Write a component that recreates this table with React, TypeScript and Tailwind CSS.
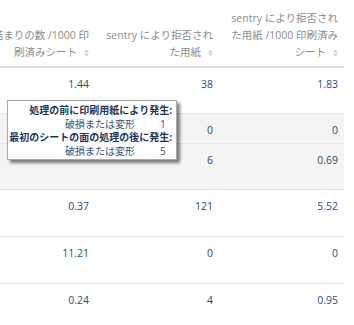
import React from "react";

const SortIcon = () => (
  <svg width="5" height="8" viewBox="0 0 5 8" className="ml-[7px] shrink-0">
    <path d="M0 3.4 L2.5 0.4 L5 3.4 Z" fill="#cfcfcf" />
    <path d="M0 4.6 L5 4.6 L2.5 7.6 Z" fill="#cfcfcf" />
  </svg>
);

const W = ["w-[97px]", "w-[124px]", "w-[123px]"];
const PR = ["pr-[8px]", "pr-[8px]", "pr-[6px]"];

const rows: { h: string; bg: string; v: string[] }[] = [
  { h: "h-[46px]", bg: "bg-white", v: ["1.44", "38", "1.83"] },
  { h: "h-[30px]", bg: "bg-[#f4f4f4]", v: ["", "0", "0"] },
  { h: "h-[46px]", bg: "bg-[#f4f4f4]", v: ["", "6", "0.69"] },
  { h: "h-[47px]", bg: "bg-white", v: ["0.37", "121", "5.52"] },
  { h: "h-[47px]", bg: "bg-white", v: ["11.21", "0", "0"] },
  { h: "h-[47px]", bg: "bg-white", v: ["0.24", "4", "0.95"] },
];

export default function App() {
  const font = { fontFamily: '"Open Sans", "Noto Sans CJK JP", sans-serif' };
  return (
    <div
      className="relative w-[354px] h-[325px] overflow-hidden bg-white"
      style={font}
    >
      <div className="w-[344px] text-[10.5px]">
        {/* header */}
        <div className="flex h-[68px] border-b-2 border-[#dddddd] text-[#8c8c8c] leading-[17px]">
          <div className={`${W[0]} ${PR[0]} flex flex-col items-end justify-end pb-[5px]`}>
            <div className="whitespace-nowrap">紙詰まりの数 /1000 印</div>
            <div className="whitespace-nowrap flex items-center">
              刷済みシート
              <SortIcon />
            </div>
          </div>
          <div className={`${W[1]} ${PR[1]} flex flex-col items-end justify-end pb-[5px]`}>
            <div className="whitespace-nowrap">sentry により拒否され</div>
            <div className="whitespace-nowrap flex items-center">
              た用紙
              <SortIcon />
            </div>
          </div>
          <div className={`${W[2]} ${PR[2]} flex flex-col items-end justify-end pb-[5px]`}>
            <div className="whitespace-nowrap">sentry により拒否され</div>
            <div className="whitespace-nowrap">た用紙 /1000 印刷済み</div>
            <div className="whitespace-nowrap flex items-center">
              シート
              <SortIcon />
            </div>
          </div>
        </div>
        {/* body */}
        {rows.map((r, i) => (
          <div
            key={i}
            className={`flex ${r.h} ${r.bg} text-[#2f4e6f] leading-[16px] border-b border-[#e6e6e6]`}
          >
            {r.v.map((v, j) => (
              <div
                key={j}
                className={`${W[j]} ${PR[j]} pt-[8px] text-right whitespace-nowrap`}
              >
                {v}
              </div>
            ))}
          </div>
        ))}
      </div>

      {/* tooltip */}
      <div className="absolute left-[7px] top-[100px] w-[170px] bg-white border border-[#a9a9a9] shadow-[3px_3px_3px_rgba(0,0,0,0.5)] pt-[3px] pb-[1px] pr-[4px] text-[10px] leading-[13.5px]">
        <div className="text-right font-bold text-[#1c3658] whitespace-nowrap">
          処理の前に印刷用紙により発生:
        </div>
        <div className="flex justify-end text-[#35557a] whitespace-nowrap">
          <span>破損または変形</span>
          <span className="ml-[25px] w-[12px] text-left">1</span>
        </div>
        <div className="text-right font-bold text-[#1c3658] whitespace-nowrap">
          最初のシートの面の処理の後に発生:
        </div>
        <div className="flex justify-end text-[#35557a] whitespace-nowrap">
          <span>破損または変形</span>
          <span className="ml-[25px] w-[12px] text-left">5</span>
        </div>
      </div>
    </div>
  );
}
